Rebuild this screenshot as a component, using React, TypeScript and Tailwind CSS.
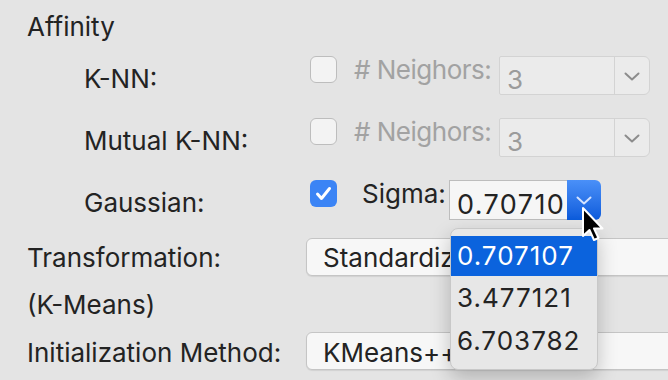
import React from "react";

function Chevron(props: { color: string }) {
  return (
    <svg width="16" height="9" viewBox="0 0 16 9">
      <path
        d="M1.5 1.5 L8 7.5 L14.5 1.5"
        fill="none"
        stroke={props.color}
        strokeWidth="2"
        strokeLinecap="round"
        strokeLinejoin="round"
      />
    </svg>
  );
}

function Checkbox(props: { checked?: boolean }) {
  if (props.checked) {
    return (
      <div className="mt-[1px] flex h-[27px] w-[27px] shrink-0 items-center justify-center rounded-[6px] bg-[#3b84f5]">
        <svg width="27" height="27" viewBox="0 0 27 27">
          <path
            d="M7.5 14 L11.5 18.5 L19.5 8.5"
            fill="none"
            stroke="white"
            strokeWidth="3"
            strokeLinecap="round"
            strokeLinejoin="round"
          />
        </svg>
      </div>
    );
  }
  return (
    <div className="mt-[1px] h-[27px] w-[27px] shrink-0 rounded-[6px] border border-[#bdbdbd] bg-[#f3f3f3]" />
  );
}

function DisabledCombo() {
  return (
    <div className="mt-[1px] flex h-[39px] w-[151px] shrink-0 rounded-l-[2px] rounded-r-[6px] border border-[#d3d3d3] bg-[#ebebeb]">
      <div className="flex-1 border-r border-[#d3d3d3] pl-[7px] pt-[8px] text-[#9b9b9b]">3</div>
      <div className="flex w-[34px] items-center justify-center pt-[2px]">
        <Chevron color="#8c8c8c" />
      </div>
    </div>
  );
}

function NeighborRow(props: { label: string }) {
  return (
    <div className="flex h-[62px] items-start">
      <div className="w-[283px] shrink-0 pl-[57px] pt-[9px]">{props.label}</div>
      <Checkbox />
      <div className="w-[162px] shrink-0 whitespace-nowrap pl-[17px] tracking-[-0.5px] text-[#a2a2a2]">
        # Neighors:
      </div>
      <DisabledCombo />
    </div>
  );
}

export default function App() {
  return (
    <div className="relative h-[380px] w-[668px] overflow-hidden bg-[#e4e4e4] font-[Inter,sans-serif] text-[26px] leading-[30px] text-[#232323]">
      <div className="pl-[27px] pt-[12px]">
        <div>Affinity</div>

        <div className="mt-[13px]">
          <NeighborRow label="K-NN:" />
          <NeighborRow label="Mutual K-NN:" />

          <div className="flex h-[59px] items-start">
            <div className="w-[283px] shrink-0 pl-[57px] pt-[9px]">Gaussian:</div>
            <Checkbox checked />
            <div className="w-[112px] shrink-0 pl-[25px]">Sigma:</div>
            <div className="mt-[1px] flex h-[40px] w-[152px] shrink-0">
              <div className="flex-1 overflow-hidden whitespace-nowrap border border-r-0 border-[#bdbdbd] bg-[#f6f6f6] pl-[7px] pt-[9px] text-[27px] tracking-[1.4px]">
                0.70710
              </div>
              <div className="flex w-[34px] items-center justify-center rounded-r-[6px] bg-gradient-to-b from-[#4a90f8] to-[#0a5bdb]">
                <Chevron color="#d4e3ff" />
              </div>
            </div>
          </div>
        </div>

        <div className="flex h-[38px] items-start">
          <div className="w-[279px] shrink-0 pt-[5px]">Transformation:</div>
          <div className="h-[38px] w-[400px] shrink-0 whitespace-nowrap rounded-[6px] border border-[#c5c5c5] bg-[#f7f7f7] pl-[16px] pt-[4px] shadow-[0_1px_1px_rgba(0,0,0,0.08)]">
            Standardiz
          </div>
        </div>

        <div className="mt-[14px] h-[30px]">(K-Means)</div>

        <div className="mt-[12px] flex h-[38px] items-start">
          <div className="w-[279px] shrink-0 pt-[6px]">Initialization Method:</div>
          <div className="h-[38px] w-[400px] shrink-0 whitespace-nowrap rounded-[6px] border border-[#c5c5c5] bg-[#f7f7f7] pl-[16px] pt-[5px] shadow-[0_1px_1px_rgba(0,0,0,0.08)]">
            KMeans++
          </div>
        </div>
      </div>

      {/* open popup of the sigma combo */}
      <div className="absolute left-[450px] top-[228px] h-[142px] w-[148px] rounded-[8px] border border-[#c8c8c8] bg-[#e7e7e7] pt-[7px] tracking-[1px] shadow-[0_8px_20px_rgba(0,0,0,0.22)]">
        <div className="h-[40px] bg-[#0b63dd] pl-[6px] leading-[40px] text-white">0.707107</div>
        <div className="h-[43px] pl-[6px] leading-[43px]">3.477121</div>
        <div className="h-[43px] pl-[6px] leading-[43px]">6.703782</div>
      </div>

      <svg
        width="26"
        height="38"
        viewBox="0 0 26 38"
        className="absolute left-[581px] top-[206px]"
      >
        <path
          d="M2 2 L2 30 L8.5 24 L13 34 L17.5 32 L13 22.5 L21.5 22.5 Z"
          fill="black"
          stroke="white"
          strokeWidth="2"
          strokeLinejoin="round"
        />
      </svg>
    </div>
  );
}
